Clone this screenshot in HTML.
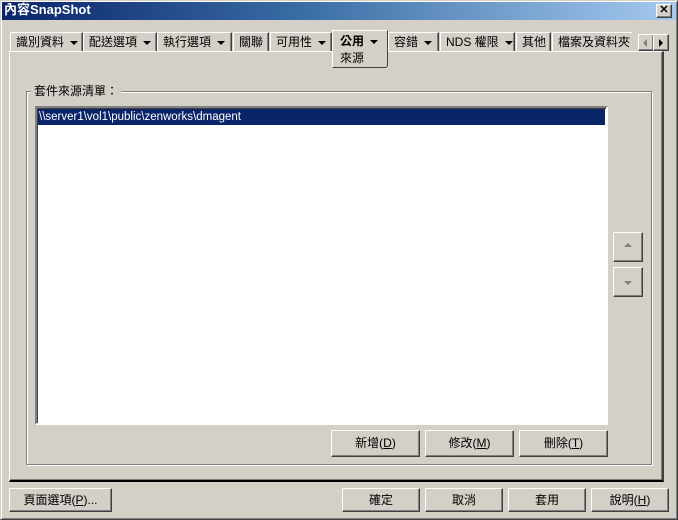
<!DOCTYPE html><html><head><meta charset="utf-8"><style>
*{box-sizing:border-box;margin:0;padding:0}
body{width:678px;height:520px;background:#d4d0c8;position:relative;overflow:hidden;font:12px "Liberation Sans","Noto Sans CJK TC",sans-serif;color:#000}
.a{position:absolute}
.title{left:0;top:0;width:678px;height:20px;background:linear-gradient(90deg,#0a246a 0%,#3a6ea5 45%,#a6caf0 100%);color:#fff;font-weight:bold;font-size:13px;line-height:20px;padding-left:4px}
.raised{border:1px solid;border-color:#fff #404040 #404040 #fff;box-shadow:inset -1px -1px #808080;background:#d4d0c8}
.btn{text-align:center;line-height:24px}
.tab{top:32px;height:19px;border:1px solid;border-color:#fff #404040 transparent #fff;border-bottom:none;box-shadow:inset -1px 0 #808080;line-height:19px;padding-left:5px;white-space:nowrap;overflow:hidden}
.ar{display:inline-block;width:0;height:0;border-left:4px solid transparent;border-right:4px solid transparent;border-top:4px solid #000;vertical-align:middle;margin-left:6px}
</style></head><body>
<div class="a title">內容SnapShot</div>
<div class="a raised" style="left:656px;top:4px;width:16px;height:14px;font-size:11px;line-height:11px;text-align:center;font-weight:bold">✕</div>
<div class="a" style="left:9px;top:51px;width:655px;height:431px;border-top:1px solid #fff;border-left:1px solid #fff;border-right:2px solid #404040;border-bottom:2px solid #000;box-shadow:inset -1px -1px #808080"></div>
<div class="a tab" style="left:10px;width:73px">識別資料<span class="ar"></span></div>
<div class="a tab" style="left:83px;width:74px">配送選項<span class="ar"></span></div>
<div class="a tab" style="left:157px;width:75px">執行選項<span class="ar"></span></div>
<div class="a tab" style="left:233px;width:36px">關聯</div>
<div class="a tab" style="left:270px;width:62px">可用性<span class="ar"></span></div>
<div class="a tab" style="left:388px;width:51px">容錯<span class="ar"></span></div>
<div class="a tab" style="left:440px;width:75px">NDS 權限<span class="ar"></span></div>
<div class="a tab" style="left:516px;width:35px">其他</div>
<div class="a tab" style="left:552px;width:80px;border-right:none;box-shadow:none">檔案及資料夾</div>
<div class="a" style="left:332px;top:30px;width:56px;height:38px;background:#d4d0c8;border:1px solid;border-color:#fff #404040 #404040 #fff;border-radius:0 0 3px 0;line-height:17px;padding-left:7px;padding-top:2px"><b>公用</b><span class="ar"></span><br>來源</div>
<div class="a raised" style="left:638px;top:34px;width:16px;height:17px"><span class="a" style="left:4px;top:4px;border-top:4px solid transparent;border-bottom:4px solid transparent;border-right:4px solid #808080"></span></div>
<div class="a raised" style="left:653px;top:34px;width:16px;height:17px"><span class="a" style="left:5px;top:4px;border-top:4px solid transparent;border-bottom:4px solid transparent;border-left:4px solid #000"></span></div>
<div class="a" style="left:26px;top:91px;width:626px;height:374px;border:1px solid #808080;box-shadow:1px 1px #fff,inset 1px 1px #fff"></div>
<div class="a" style="left:31px;top:84px;background:#d4d0c8;padding:0 3px;line-height:14px">套件來源清單：</div>
<div class="a" style="left:35px;top:106px;width:573px;height:319px;background:#fff;border:2px solid;border-color:#808080 #fff #fff #808080;box-shadow:inset 1px 1px #404040"></div>
<div class="a" style="left:38px;top:109px;width:567px;height:16px;background:#0a246a;color:#fff;line-height:16px;padding-left:1px;font-size:11.5px">\\server1\vol1\public\zenworks\dmagent</div>
<div class="a raised" style="left:613px;top:232px;width:30px;height:30px"><span class="a" style="left:10px;top:10px;border-left:4px solid transparent;border-right:4px solid transparent;border-bottom:4px solid #808080"></span></div>
<div class="a raised" style="left:613px;top:267px;width:30px;height:30px"><span class="a" style="left:10px;top:13px;border-left:4px solid transparent;border-right:4px solid transparent;border-top:4px solid #808080"></span></div>
<div class="a raised btn" style="left:331px;top:430px;width:89px;height:27px;line-height:25px">新增(<u>D</u>)</div>
<div class="a raised btn" style="left:425px;top:430px;width:89px;height:27px;line-height:25px">修改(<u>M</u>)</div>
<div class="a raised btn" style="left:519px;top:430px;width:89px;height:27px;line-height:25px">刪除(<u>T</u>)</div>
<div class="a raised btn" style="left:9px;top:488px;width:103px;height:24px;line-height:22px">頁面選項(<u>P</u>)...</div>
<div class="a raised btn" style="left:342px;top:488px;width:78px;height:24px;line-height:22px">確定</div>
<div class="a raised btn" style="left:425px;top:488px;width:78px;height:24px;line-height:22px">取消</div>
<div class="a raised btn" style="left:508px;top:488px;width:78px;height:24px;line-height:22px">套用</div>
<div class="a raised btn" style="left:591px;top:488px;width:78px;height:24px;line-height:22px">說明(<u>H</u>)</div>
<div class="a" style="left:0;top:0;width:678px;height:520px;border:1px solid;border-color:#d4d0c8 #404040 #404040 #d4d0c8;box-shadow:inset 1px 1px #fff,inset -1px -1px #808080;pointer-events:none"></div>
</body></html>
